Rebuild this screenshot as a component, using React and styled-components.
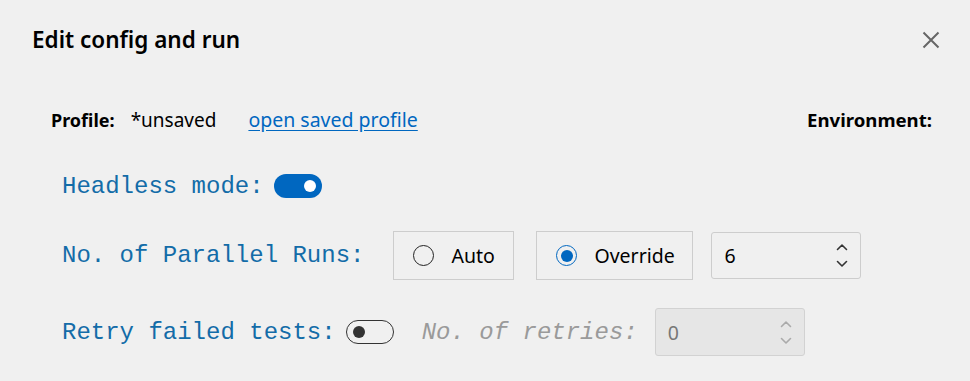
import React from "react";
import styled, { createGlobalStyle } from "styled-components";

const Global = createGlobalStyle`
  html, body { margin: 0; padding: 0; background: #f0f0f0; }
  body { font-family: "Noto Sans", "Open Sans", sans-serif; color: #000; }
  * { box-sizing: border-box; }
`;

const Dialog = styled.div`
  width: 970px;
  height: 381px;
  background: #f0f0f0;
  display: flex;
  flex-direction: column;
`;

const Header = styled.div`
  display: flex;
  justify-content: space-between;
  align-items: center;
  padding: 25px 29px 0 32px;
  height: 55px;
`;

const Title = styled.h2`
  margin: 0;
  font-size: 22.5px;
  line-height: 30px;
  font-weight: 600;
`;

const CloseButton = styled.button`
  border: none;
  background: transparent;
  padding: 0;
  width: 20px;
  height: 20px;
  display: flex;
  align-items: center;
  justify-content: center;
  cursor: pointer;
`;

const Body = styled.div`
  padding: 0 38px 0 51px;
`;

const ProfileRow = styled.div`
  margin-top: 52px;
  display: flex;
  justify-content: space-between;
  align-items: baseline;
  font-size: 19px;
  line-height: 26px;
`;

const ProfileGroup = styled.div`
  display: flex;
  align-items: baseline;
`;

const Strong = styled.span`
  font-weight: 700;
  font-size: ${(p) => p.$size || 18}px;
`;

const Plain = styled.span`
  margin-left: ${(p) => p.$ml || 0}px;
`;

const Link = styled.a`
  margin-left: 32px;
  color: #0067c0;
  text-decoration: underline;
  text-underline-offset: 3px;
  font-size: 19.5px;
  cursor: pointer;
`;

const Form = styled.div`
  padding-left: 11px;
  display: flex;
  flex-direction: column;
`;

const Row = styled.div`
  display: flex;
  align-items: center;
  height: ${(p) => p.$h}px;
  margin-top: ${(p) => p.$mt}px;
`;

const Label = styled.span`
  font-family: "Liberation Mono", "Courier New", monospace;
  font-size: 24px;
  color: ${(p) => (p.$muted ? "#9a9a9a" : "#136ca8")};
  font-style: ${(p) => (p.$muted ? "italic" : "normal")};
  white-space: pre;
  margin-right: ${(p) => p.$mr || 0}px;
  margin-left: ${(p) => p.$ml || 0}px;
`;

const Toggle = styled.span`
  position: relative;
  width: 48px;
  height: 24px;
  border-radius: 12px;
  background: ${(p) => (p.$on ? "#0067c0" : "transparent")};
  border: ${(p) => (p.$on ? "none" : "1px solid #333")};
  flex: none;
  &::after {
    content: "";
    position: absolute;
    top: 50%;
    width: 12px;
    height: 12px;
    margin-top: -6px;
    border-radius: 50%;
    background: ${(p) => (p.$on ? "#fff" : "#333")};
    ${(p) => (p.$on ? "right: 6px;" : "left: 6px;")}
  }
`;

const Choice = styled.label`
  display: flex;
  align-items: center;
  height: 49px;
  width: ${(p) => p.$w}px;
  margin-right: ${(p) => p.$mr}px;
  border: 1px solid #cdcdcd;
  padding-left: 19px;
  font-size: 19.5px;
`;

const Radio = styled.span`
  position: relative;
  width: 21px;
  height: 21px;
  border-radius: 50%;
  border: 1px solid ${(p) => (p.$on ? "#0067c0" : "#222")};
  margin-right: 17px;
  flex: none;
  &::after {
    content: "";
    display: ${(p) => (p.$on ? "block" : "none")};
    position: absolute;
    left: 3.5px;
    top: 3.5px;
    width: 12px;
    height: 12px;
    border-radius: 50%;
    background: #0067c0;
  }
`;

const NumberBox = styled.div`
  display: flex;
  align-items: center;
  justify-content: space-between;
  width: 150px;
  height: ${(p) => p.$h}px;
  border: 1px solid ${(p) => (p.$disabled ? "#d2d2d2" : "#cdcdcd")};
  border-radius: 3px;
  background: ${(p) => (p.$disabled ? "#e6e6e6" : "transparent")};
  padding: 0 12px 0 12px;
  font-size: 19.5px;
  color: ${(p) => (p.$disabled ? "#777" : "#000")};
`;

const Spinner = styled.div`
  display: flex;
  flex-direction: column;
  gap: 9px;
  align-items: center;
`;

const Chevron = ({ up, color }) => (
  <svg width="12" height="8" viewBox="0 0 12 8">
    <path
      d={up ? "M1.5 6.5 L6 2 L10.5 6.5" : "M1.5 1.5 L6 6 L10.5 1.5"}
      fill="none"
      stroke={color}
      strokeWidth="1.6"
      strokeLinecap="round"
      strokeLinejoin="round"
    />
  </svg>
);

export default function App() {
  return (
    <>
      <Global />
      <Dialog>
        <Header>
          <Title>Edit config and run</Title>
          <CloseButton aria-label="Close">
            <svg width="18" height="18" viewBox="0 0 18 18">
              <path d="M1.5 1.5 L16.5 16.5 M16.5 1.5 L1.5 16.5" stroke="#666" strokeWidth="2" />
            </svg>
          </CloseButton>
        </Header>
        <Body>
          <ProfileRow>
            <ProfileGroup>
              <Strong>Profile:</Strong>
              <Plain $ml={16}>*unsaved</Plain>
              <Link>open saved profile</Link>
            </ProfileGroup>
            <Strong $size={18.6}>Environment:</Strong>
          </ProfileRow>
          <Form>
            <Row $h={42} $mt={32}>
              <Label $mr={10}>Headless mode:</Label>
              <Toggle $on />
            </Row>
            <Row $h={49} $mt={24}>
              <Label $mr={29}>No. of Parallel Runs:</Label>
              <Choice $w={121} $mr={22}>
                <Radio />
                Auto
              </Choice>
              <Choice $w={157} $mr={18}>
                <Radio $on />
                Override
              </Choice>
              <NumberBox $h={47}>
                <span>6</span>
                <Spinner>
                  <Chevron up color="#333" />
                  <Chevron color="#333" />
                </Spinner>
              </NumberBox>
            </Row>
            <Row $h={48} $mt={28}>
              <Label $mr={10}>Retry failed tests:</Label>
              <Toggle />
              <Label $muted $ml={28} $mr={17}>No. of retries:</Label>
              <NumberBox $h={48} $disabled>
                <span>0</span>
                <Spinner>
                  <Chevron up color="#aaa" />
                  <Chevron color="#aaa" />
                </Spinner>
              </NumberBox>
            </Row>
          </Form>
        </Body>
      </Dialog>
    </>
  );
}
